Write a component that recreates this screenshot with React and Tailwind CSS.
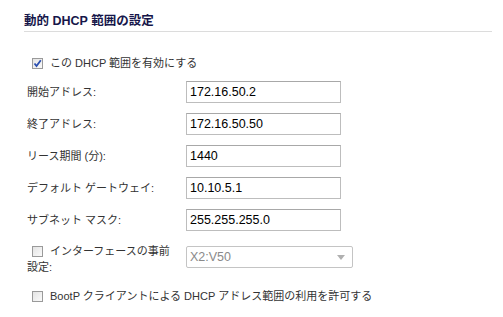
import React from 'react';

const font = { fontFamily: '"Liberation Sans", "Noto Sans CJK JP", sans-serif' };

function Check({ checked }) {
  return (
    <span className="w-[11px] h-[11px] shrink-0 border border-[#9a9a9a] bg-gradient-to-br from-[#e4e4e4] to-[#fafafa] flex items-center justify-center">
      {checked && (
        <svg width="9" height="9" viewBox="0 0 9 9">
          <path d="M1.5 4.5 L3.5 7 L7.8 1.2" fill="none" stroke="#2b4fb0" strokeWidth="1.8" />
        </svg>
      )}
    </span>
  );
}

const rows = [
  { label: '開始アドレス:', value: '172.16.50.2' },
  { label: '終了アドレス:', value: '172.16.50.50' },
  { label: 'リース期間 (分):', value: '1440' },
  { label: 'デフォルト ゲートウェイ:', value: '10.10.5.1' },
  { label: 'サブネット マスク:', value: '255.255.255.0' },
];

export default function App() {
  return (
    <div className="w-[503px] h-[317px] bg-white pl-[24px] text-[11px] text-[#333]" style={font}>
      {/* Section header */}
      <div className="w-[468px] pt-[13px] pb-[2px] leading-[16px] border-b border-[#dcdcdc] font-bold text-[12.5px] text-[#16164a]">
        動的 DHCP 範囲の設定
      </div>

      {/* Enable */}
      <div className="mt-[23px] pl-[8px] h-[16px] flex items-center gap-[7px] leading-[16px]">
        <Check checked />
        <span>この DHCP 範囲を有効にする</span>
      </div>

      {/* Fields */}
      <div className="mt-[10px] pl-[3px] flex flex-col gap-[10px]">
        {rows.map((r) => (
          <div key={r.label} className="flex items-center h-[22px]">
            <span className="w-[159px] shrink-0">{r.label}</span>
            <div className="w-[155px] h-[22px] border border-[#bdbdbd] border-t-[#a8a8a8] flex items-center pl-[3px] text-[12.5px] text-black">
              {r.value}
            </div>
          </div>
        ))}
      </div>

      {/* Interface row */}
      <div className="mt-[12px] pl-[3px] flex items-start">
        <div className="w-[159px] shrink-0 leading-[16px]">
          <div className="pl-[5px] flex items-center gap-[7px] h-[16px]">
            <Check />
            <span>インターフェースの事前</span>
          </div>
          <div>設定:</div>
        </div>
        <div className="mt-[3px] w-[167px] h-[22px] border border-[#c4c4c4] rounded-[2px] flex items-center justify-between pl-[3px] pr-[7px] text-[12.5px] text-[#8a8a8a]">
          <span>X2:V50</span>
          <svg width="8" height="5" viewBox="0 0 8 5">
            <path d="M0 0 H8 L4 5 Z" fill="#b0b0b0" />
          </svg>
        </div>
      </div>

      {/* BootP */}
      <div className="mt-[13px] pl-[8px] h-[16px] flex items-center gap-[7px] leading-[16px]">
        <Check />
        <span>BootP クライアントによる DHCP アドレス範囲の利用を許可する</span>
      </div>
    </div>
  );
}
